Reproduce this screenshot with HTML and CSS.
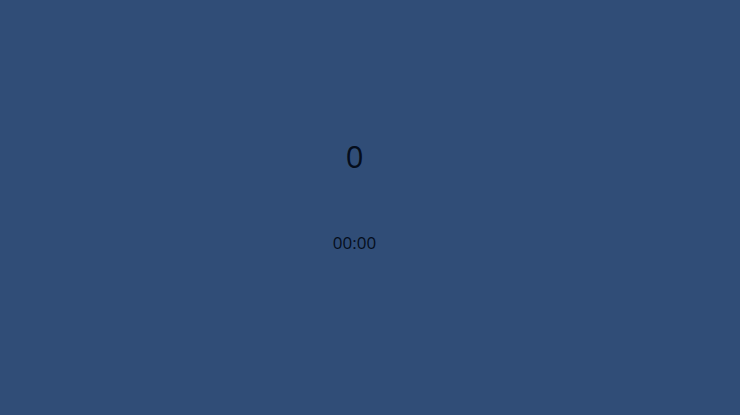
FILE: index.html
```html
<!DOCTYPE html>
<html>
<head>
<meta charset="utf-8">
<link rel="stylesheet" href="styles.css">
</head>
<body>
<div class="app">
  <div class="score">0</div>
  <div class="timer">00:00</div>
</div>
</body>
</html>
```
FILE: styles.css
```css
html, body {
  margin: 0;
  padding: 0;
  height: 100%;
  background: #304d77;
}
.app {
  width: 709px;
  height: 415px;
  display: flex;
  flex-direction: column;
  align-items: center;
  font-family: "Open Sans", "Noto Sans", sans-serif;
  color: #050d1c;
  padding-top: 134px;
  box-sizing: border-box;
}
.score {
  font-size: 31px;
  line-height: 44px;
}
.timer {
  font-size: 17px;
  line-height: 22px;
  margin-top: 54px;
}
```
